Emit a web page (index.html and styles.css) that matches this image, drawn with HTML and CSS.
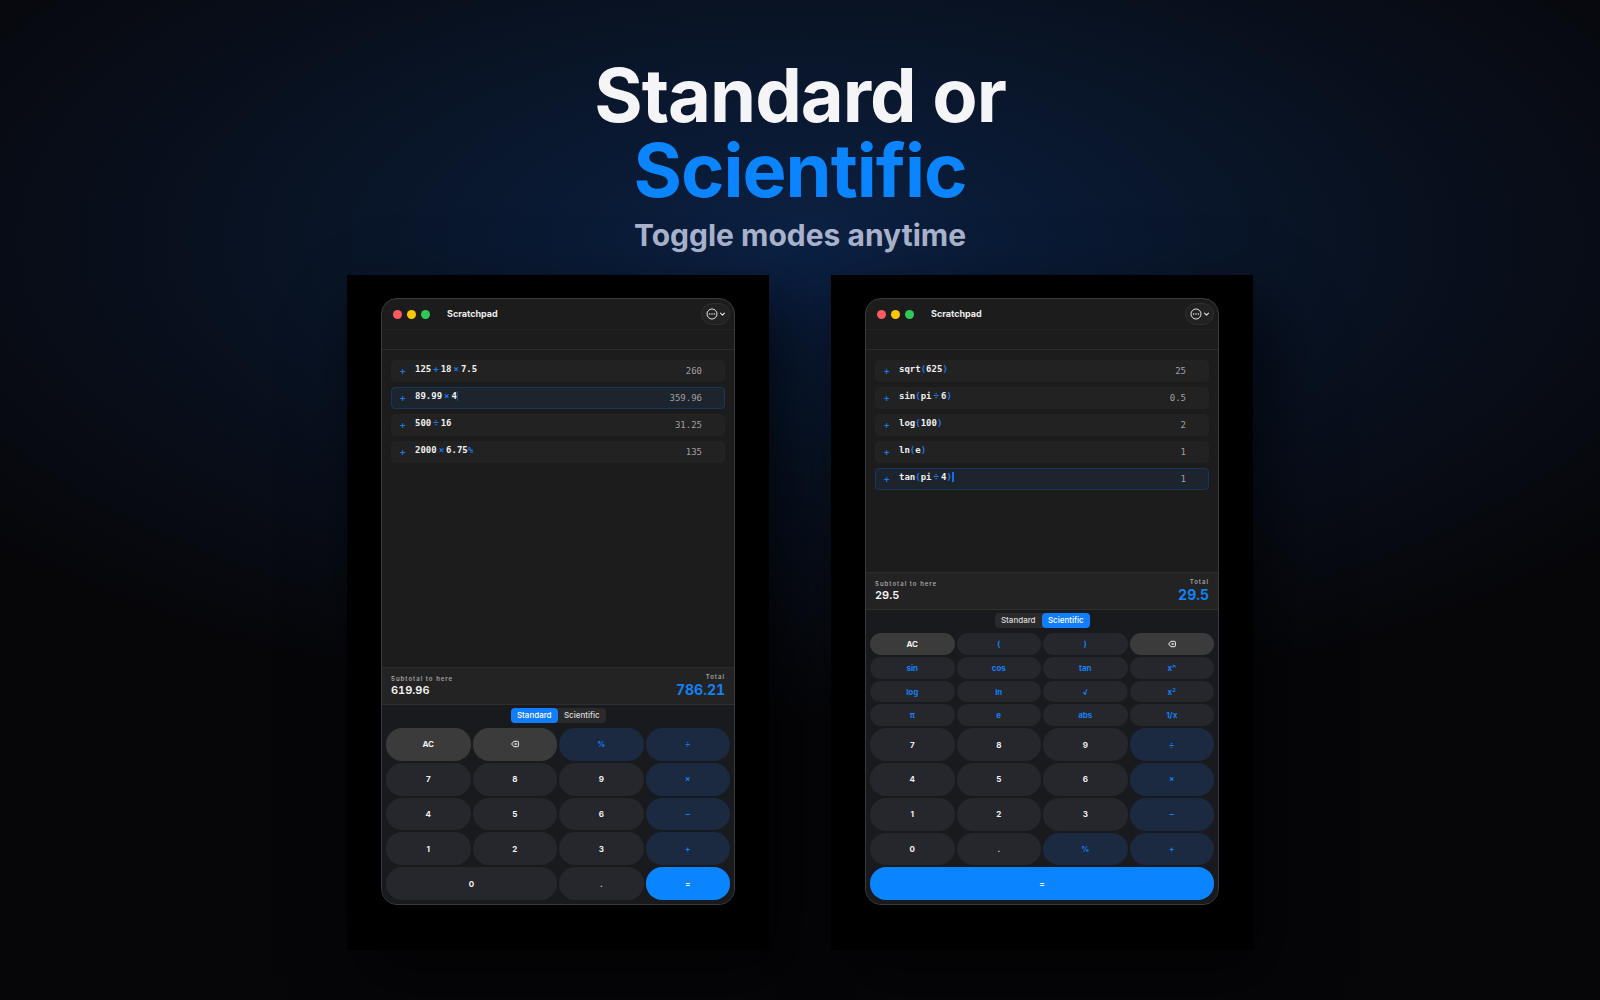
FILE: index.html
```html
<!DOCTYPE html>
<html lang="en">
<head>
<meta charset="utf-8">
<meta name="viewport" content="width=device-width, initial-scale=1">
<title>Scratchpad – Standard or Scientific</title>
<link rel="stylesheet" href="styles.css">
</head>
<body>
<svg class="sprite" aria-hidden="true">
  <symbol id="more" viewBox="0 0 22 12">
    <circle cx="6" cy="6" r="5" fill="none" stroke="currentColor"/>
    <circle cx="3.6" cy="6" r=".8" fill="currentColor"/>
    <circle cx="6" cy="6" r=".8" fill="currentColor"/>
    <circle cx="8.4" cy="6" r=".8" fill="currentColor"/>
    <path d="M14.5 5.2l2 2 2-2" fill="none" stroke="currentColor" stroke-width="1.1" stroke-linecap="round" stroke-linejoin="round"/>
  </symbol>
  <symbol id="erase" viewBox="0 0 8 8">
    <path d="M2.9 1.3h3.6a.9.9 0 0 1 .9.9v3.6a.9.9 0 0 1-.9.9H2.9L.6 4z" fill="none" stroke="currentColor" stroke-width="1" stroke-linejoin="round"/>
    <path d="M3.5 2.9l2.2 2.2M5.7 2.9L3.5 5.1" stroke="currentColor" stroke-width=".9"/>
  </symbol>
</svg>
<header class="hero">
  <h1 class="headline"><span class="row">Standard or</span> <span class="row accent">Scientific</span></h1>
  <p class="tagline">Toggle modes anytime</p>
</header>
<main class="stage">
  <section class="panel" aria-label="Standard mode">
    <div class="window">
      <div class="titlebar">
        <span class="light red"></span><span class="light yellow"></span><span class="light green"></span>
        <h2 class="title">Scratchpad</h2>
        <button class="menu" type="button" aria-label="More"><svg><use href="#more"/></svg></button>
      </div>
      <div class="toolbar"></div>
      <ol class="lines">
        <li class="line"><span class="add">+</span><span class="expr">125<i>+</i>18<i>×</i>7.5</span><output class="result">260</output></li>
        <li class="line active"><span class="add">+</span><span class="expr">89.99<i>×</i>4<span class="caret dim"></span></span><output class="result">359.96</output></li>
        <li class="line"><span class="add">+</span><span class="expr">500<i>÷</i>16</span><output class="result">31.25</output></li>
        <li class="line"><span class="add">+</span><span class="expr">2000<i>×</i>6.75<b>%</b></span><output class="result">135</output></li>
      </ol>
      <dl class="summary">
        <div class="subtotal"><dt>Subtotal to here</dt><dd>619.96</dd></div>
        <div class="total"><dt>Total</dt><dd>786.21</dd></div>
      </dl>
      <div class="pad">
        <div class="modes">
          <button class="mode on" type="button" aria-pressed="true">Standard</button>
          <button class="mode" type="button" aria-pressed="false">Scientific</button>
        </div>
        <div class="keys standard">
          <button class="key util" type="button">AC</button>
          <button class="key util" type="button" aria-label="Delete"><svg><use href="#erase"/></svg></button>
          <button class="key op" type="button">%</button>
          <button class="key op" type="button">÷</button>
          <button class="key" type="button">7</button>
          <button class="key" type="button">8</button>
          <button class="key" type="button">9</button>
          <button class="key op" type="button">×</button>
          <button class="key" type="button">4</button>
          <button class="key" type="button">5</button>
          <button class="key" type="button">6</button>
          <button class="key op" type="button">−</button>
          <button class="key" type="button">1</button>
          <button class="key" type="button">2</button>
          <button class="key" type="button">3</button>
          <button class="key op" type="button">+</button>
          <button class="key double" type="button">0</button>
          <button class="key" type="button">.</button>
          <button class="key equals" type="button">=</button>
        </div>
      </div>
    </div>
  </section>
  <section class="panel" aria-label="Scientific mode">
    <div class="window">
      <div class="titlebar">
        <span class="light red"></span><span class="light yellow"></span><span class="light green"></span>
        <h2 class="title">Scratchpad</h2>
        <button class="menu" type="button" aria-label="More"><svg><use href="#more"/></svg></button>
      </div>
      <div class="toolbar"></div>
      <ol class="lines">
        <li class="line"><span class="add">+</span><span class="expr">sqrt<b>(</b>625<b>)</b></span><output class="result">25</output></li>
        <li class="line"><span class="add">+</span><span class="expr">sin<b>(</b>pi<i>÷</i>6<b>)</b></span><output class="result">0.5</output></li>
        <li class="line"><span class="add">+</span><span class="expr">log<b>(</b>100<b>)</b></span><output class="result">2</output></li>
        <li class="line"><span class="add">+</span><span class="expr">ln<b>(</b>e<b>)</b></span><output class="result">1</output></li>
        <li class="line active"><span class="add">+</span><span class="expr">tan<b>(</b>pi<i>÷</i>4<b>)</b><span class="caret"></span></span><output class="result">1</output></li>
      </ol>
      <dl class="summary">
        <div class="subtotal"><dt>Subtotal to here</dt><dd>29.5</dd></div>
        <div class="total"><dt>Total</dt><dd>29.5</dd></div>
      </dl>
      <div class="pad">
        <div class="modes">
          <button class="mode" type="button" aria-pressed="false">Standard</button>
          <button class="mode on" type="button" aria-pressed="true">Scientific</button>
        </div>
        <div class="keys scientific">
          <button class="key util" type="button">AC</button>
          <button class="key fn" type="button">(</button>
          <button class="key fn" type="button">)</button>
          <button class="key util" type="button" aria-label="Delete"><svg><use href="#erase"/></svg></button>
          <button class="key fn" type="button">sin</button>
          <button class="key fn" type="button">cos</button>
          <button class="key fn" type="button">tan</button>
          <button class="key fn" type="button">xⁿ</button>
          <button class="key fn" type="button">log</button>
          <button class="key fn" type="button">ln</button>
          <button class="key fn" type="button">√</button>
          <button class="key fn" type="button">x²</button>
          <button class="key fn" type="button">π</button>
          <button class="key fn" type="button">e</button>
          <button class="key fn" type="button">abs</button>
          <button class="key fn" type="button">1/x</button>
          <button class="key" type="button">7</button>
          <button class="key" type="button">8</button>
          <button class="key" type="button">9</button>
          <button class="key op" type="button">÷</button>
          <button class="key" type="button">4</button>
          <button class="key" type="button">5</button>
          <button class="key" type="button">6</button>
          <button class="key op" type="button">×</button>
          <button class="key" type="button">1</button>
          <button class="key" type="button">2</button>
          <button class="key" type="button">3</button>
          <button class="key op" type="button">−</button>
          <button class="key" type="button">0</button>
          <button class="key" type="button">.</button>
          <button class="key op" type="button">%</button>
          <button class="key op" type="button">+</button>
          <button class="key equals full" type="button">=</button>
        </div>
      </div>
    </div>
  </section>
</main>
</body>
</html>
```
FILE: styles.css
```css
* { box-sizing: border-box; margin: 0; padding: 0; }

body {
  min-height: 100vh;
  padding: 58px 20px 50px;
  background: radial-gradient(ellipse 66% 48% at 50% 24%, #0c2144 0%, #0a1a34 22%, #091426 45%, #080c15 76%, #060609 100%) #060609;
  color: #f5f5f7;
  font-family: Inter, "Liberation Sans", sans-serif;
}

button { border: 0; font: inherit; color: inherit; background: none; cursor: pointer; }
.sprite { position: absolute; width: 0; height: 0; }

.hero { text-align: center; }
.headline { font-size: 74px; line-height: 75px; font-weight: 700; letter-spacing: -1px; color: #f5f5f7; }
.row { display: block; }
.accent { color: #0a84ff; }
.tagline { margin: 7px 0 20px; font-size: 30px; line-height: 40px; font-weight: 700; color: #a9b3cb; }

.stage {
  display: grid;
  grid-template-columns: 1fr 1fr;
  gap: 62px;
  max-width: 906px;
  margin: 0 auto;
}
.panel {
  padding: 23px 34px 45px;
  background: #000;
  box-shadow: 16px 28px 60px rgba(0, 0, 0, .6);
}
.window {
  display: flex;
  flex-direction: column;
  min-height: 607px;
  border: 1px solid #3a3a3c;
  border-radius: 16px;
  overflow: hidden;
  background: #1c1c1c;
}

.titlebar {
  display: flex;
  align-items: center;
  gap: 5px;
  height: 31px;
  padding: 0 4px 0 11px;
  border-bottom: 1px solid #222;
}
.light { width: 9px; height: 9px; border-radius: 50%; }
.red { background: #ff5a5f; }
.yellow { background: #fdc700; }
.green { background: #30c955; }
.title { margin-left: 12px; font-size: 9px; line-height: 12px; font-weight: 700; color: #ececec; }
.menu {
  display: flex;
  align-items: center;
  width: 29px;
  height: 22px;
  margin-left: auto;
  padding-left: 4px;
  border: 1px solid #2f2f2f;
  border-radius: 11px;
  background: #222;
  color: #e4e4e4;
}
.menu svg { width: 22px; height: 12px; }
.toolbar { height: 20px; border-bottom: 1px solid #2c2c2c; }

.lines {
  display: flex;
  flex: 1;
  flex-direction: column;
  gap: 5px;
  padding: 10px 9px;
  list-style: none;
  font: 600 9px/12px "DejaVu Sans Mono", "Liberation Mono", monospace;
}
.line {
  display: flex;
  align-items: center;
  height: 22px;
  padding: 0 22px 0 8px;
  border: 1px solid #222;
  border-radius: 4px;
  background: #222;
}
.active { border-color: #18365c; background: #1c242e; }
.add { width: 15px; color: #1a7ae8; }
.expr { display: flex; align-items: center; padding-bottom: 4px; color: #f0f0f0; }
.expr i { padding: 0 2px; font-style: normal; color: #1a7ae8; }
.expr b { color: #1a7ae8; }
.caret { width: 2px; height: 10px; background: #0a74e6; }
.dim { width: 1px; background: #14508f; }
.result { margin-left: auto; font-weight: 400; color: #a0a0a0; }

.summary {
  display: flex;
  justify-content: space-between;
  align-items: center;
  height: 38px;
  padding: 0 9px;
  border-top: 1px solid #2c2c2c;
  border-bottom: 1px solid #2f2f2f;
  background: #232323;
  font-variant-numeric: tabular-nums;
}
.summary dt { font-size: 6px; line-height: 8px; font-weight: 600; letter-spacing: 1px; color: #a4a4a4; }
.subtotal dd { font-size: 11px; line-height: 14px; font-weight: 600; }
.total { text-align: right; }
.total dd { font-size: 14px; line-height: 18px; font-weight: 700; color: #1480f5; }

.pad { padding: 3px 4px 4px; background: #191a1d; }
.modes {
  display: flex;
  width: 95px;
  margin: 0 auto 5px;
  border-radius: 4px;
  background: #2a2a2d;
}
.mode { flex: 1; height: 15px; border-radius: 4px; font-size: 8px; line-height: 15px; color: #dcdcdc; font-weight: 500; }
.on { background: #117dff; color: #fff; }

.keys { display: grid; grid-template-columns: repeat(4, 1fr); gap: 2px; }
.standard { grid-template-rows: repeat(5, 1fr); height: 172px; }
.scientific { grid-template-rows: repeat(4, 2fr) repeat(5, 3fr); height: 267px; }
.key {
  display: flex;
  align-items: center;
  justify-content: center;
  min-height: 0;
  border-radius: 16px;
  background: #26262d;
  color: #f2f2f2;
  font-size: 8px;
  line-height: 10px;
  font-weight: 700;
}
.key svg { width: 8px; height: 8px; }
.util { background: #3b3b3c; }
.fn { color: #1480f5; }
.op { background: #1b2941; color: #1480f5; }
.equals { background: #0a84ff; }
.double { grid-column: span 2; }
.full { grid-column: 1 / -1; }

@media (max-width: 760px) {
  .stage { grid-template-columns: minmax(0, 422px); justify-content: center; }
}
```
